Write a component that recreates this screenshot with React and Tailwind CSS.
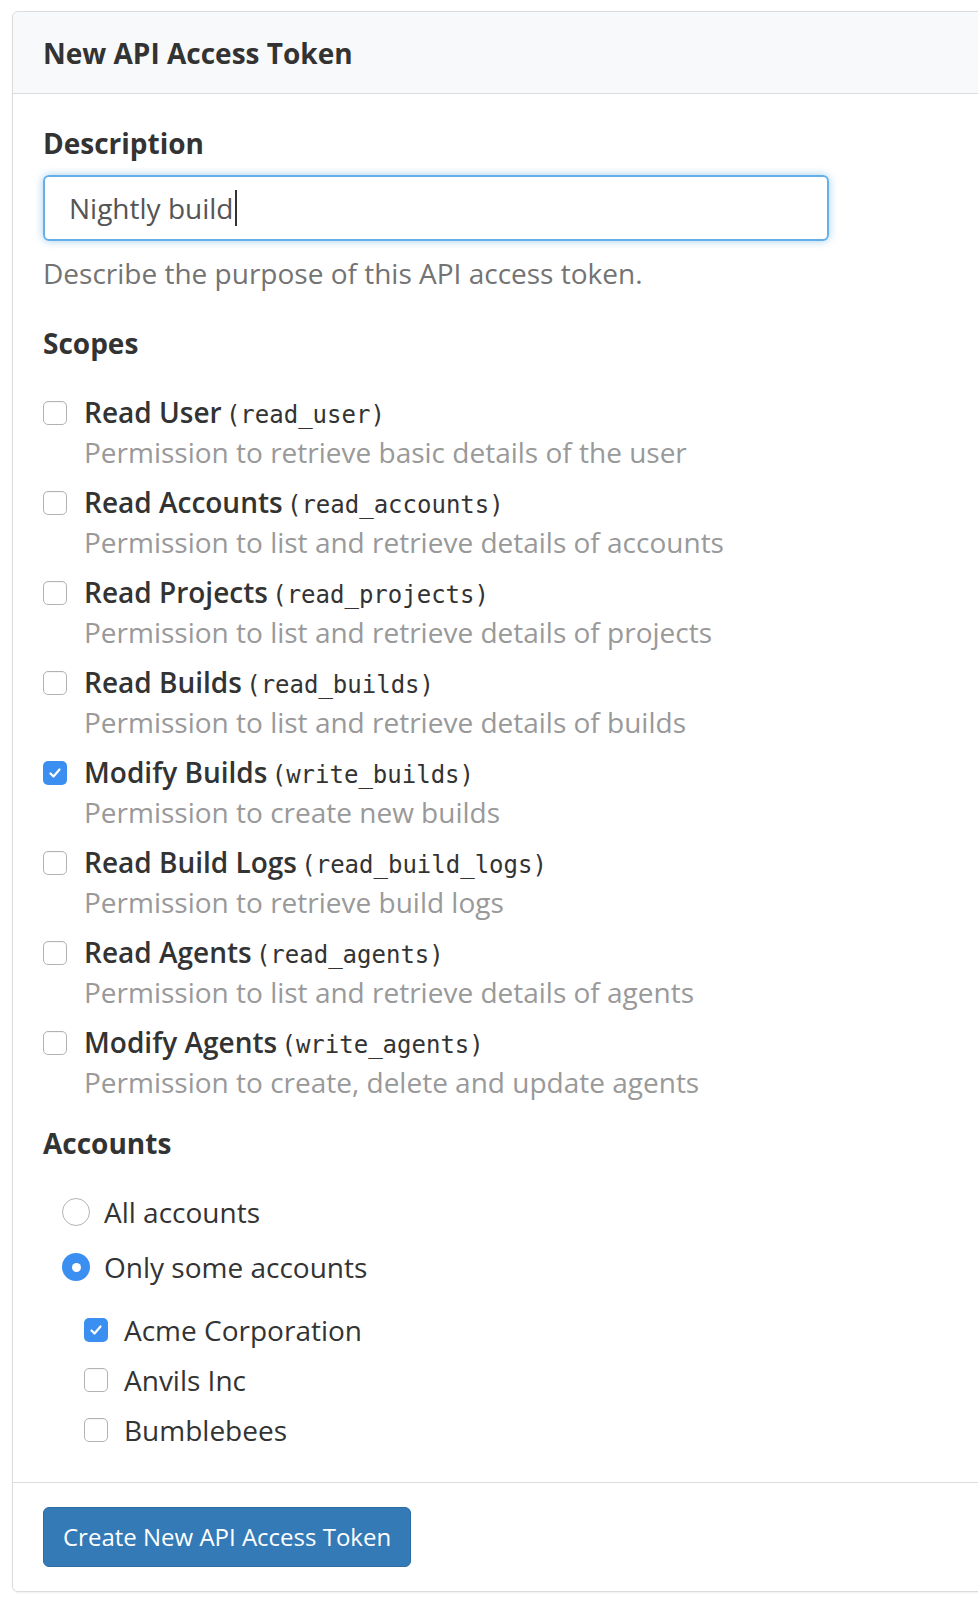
import React from 'react';

const scopes = [
  { name: 'Read User', code: 'read_user', desc: 'Permission to retrieve basic details of the user' },
  { name: 'Read Accounts', code: 'read_accounts', desc: 'Permission to list and retrieve details of accounts' },
  { name: 'Read Projects', code: 'read_projects', desc: 'Permission to list and retrieve details of projects' },
  { name: 'Read Builds', code: 'read_builds', desc: 'Permission to list and retrieve details of builds' },
  { name: 'Modify Builds', code: 'write_builds', desc: 'Permission to create new builds', checked: true },
  { name: 'Read Build Logs', code: 'read_build_logs', desc: 'Permission to retrieve build logs' },
  { name: 'Read Agents', code: 'read_agents', desc: 'Permission to list and retrieve details of agents' },
  { name: 'Modify Agents', code: 'write_agents', desc: 'Permission to create, delete and update agents' },
];

const accounts = [
  { name: 'Acme Corporation', checked: true },
  { name: 'Anvils Inc' },
  { name: 'Bumblebees' },
];

function Checkbox({ checked }) {
  if (checked) {
    return (
      <span className="flex h-[24px] w-[24px] shrink-0 items-center justify-center rounded-[5px] bg-[#3b8ff0]">
        <svg width="16" height="16" viewBox="0 0 16 16" fill="none">
          <path d="M3.5 8.5l3 3 6-7" stroke="white" strokeWidth="2.2" strokeLinecap="round" strokeLinejoin="round" />
        </svg>
      </span>
    );
  }
  return (
    <span className="block h-[24px] w-[24px] shrink-0 rounded-[5px] border border-[#b3b3b3] bg-white shadow-[inset_0_1px_1px_rgba(0,0,0,0.04)]" />
  );
}

function Radio({ checked }) {
  if (checked) {
    return (
      <span className="flex h-[28px] w-[28px] shrink-0 items-center justify-center rounded-full bg-[#3b8ff0]">
        <span className="block h-[9px] w-[9px] rounded-full bg-white" />
      </span>
    );
  }
  return <span className="block h-[28px] w-[28px] shrink-0 rounded-full border border-[#b3b3b3] bg-white" />;
}

export default function App() {
  return (
    <div className="h-[1604px] w-[978px] overflow-hidden bg-white pl-[12px] pt-[11px] font-['Open_Sans',sans-serif] text-[#333]">
      <div className="w-[1000px] rounded-[6px] border border-[#dcdcdc] shadow-[0_1px_2px_rgba(0,0,0,0.06)]">
        <div className="flex h-[82px] items-center rounded-t-[6px] border-b border-[#dcdcdc] bg-[#f8f9fa] px-[30px]">
          <h1 className="text-[28px] font-bold leading-[40px]">New API Access Token</h1>
        </div>

        <div className="px-[30px] pb-[31px] pt-[29px]">
          <label className="block text-[28px] font-bold leading-[40px]">Description</label>
          <div className="mt-[12px] flex h-[66px] w-[786px] items-center rounded-[6px] border-2 border-[#66afe9] px-[24px] shadow-[0_0_8px_rgba(102,175,233,0.6)]">
            <span className="text-[28px] leading-[40px] text-[#555]">Nightly build</span>
            <span className="ml-[2px] block h-[36px] w-[2px] bg-[#333]" />
          </div>
          <p className="mt-[12px] text-[28px] leading-[40px] text-[#737373]">Describe the purpose of this API access token.</p>

          <h2 className="mt-[30px] text-[28px] font-bold leading-[40px]">Scopes</h2>
          <div className="mt-[29px] flex flex-col gap-[10px]">
            {scopes.map((s) => (
              <div key={s.code} className="flex gap-[17px]">
                <div className="pt-[9px]">
                  <Checkbox checked={s.checked} />
                </div>
                <div>
                  <div className="h-[40px] whitespace-nowrap text-[28px] leading-[40px]">
                    <span className="font-semibold">{s.name}</span>{' '}
                    <span className="ml-[-3px] font-['DejaVu_Sans_Mono',monospace] text-[24px] leading-[0]">({s.code})</span>
                  </div>
                  <div className="h-[40px] text-[28px] leading-[40px] text-[#999]">{s.desc}</div>
                </div>
              </div>
            ))}
          </div>

          <h2 className="mt-[21px] text-[28px] font-bold leading-[40px]">Accounts</h2>
          <div className="mt-[28px] flex flex-col gap-[13px] pl-[19px]">
            <div className="flex h-[42px] items-center gap-[14px]">
              <Radio />
              <span className="text-[28px] leading-[42px]">All accounts</span>
            </div>
            <div className="flex h-[42px] items-center gap-[14px]">
              <Radio checked />
              <span className="text-[28px] leading-[42px]">Only some accounts</span>
            </div>
          </div>
          <div className="mt-[21px] flex flex-col gap-[8px] pl-[41px]">
            {accounts.map((a) => (
              <div key={a.name} className="flex h-[42px] items-center gap-[16px]">
                <Checkbox checked={a.checked} />
                <span className="text-[28px] leading-[42px]">{a.name}</span>
              </div>
            ))}
          </div>
        </div>

        <div className="border-t border-[#dcdcdc] px-[30px] pb-[24px] pt-[24px]">
          <button className="h-[60px] rounded-[6px] border border-[#2e6da4] bg-[#337ab7] px-[19px] text-[24px] leading-[36px] text-white">
            Create New API Access Token
          </button>
        </div>
      </div>
    </div>
  );
}
